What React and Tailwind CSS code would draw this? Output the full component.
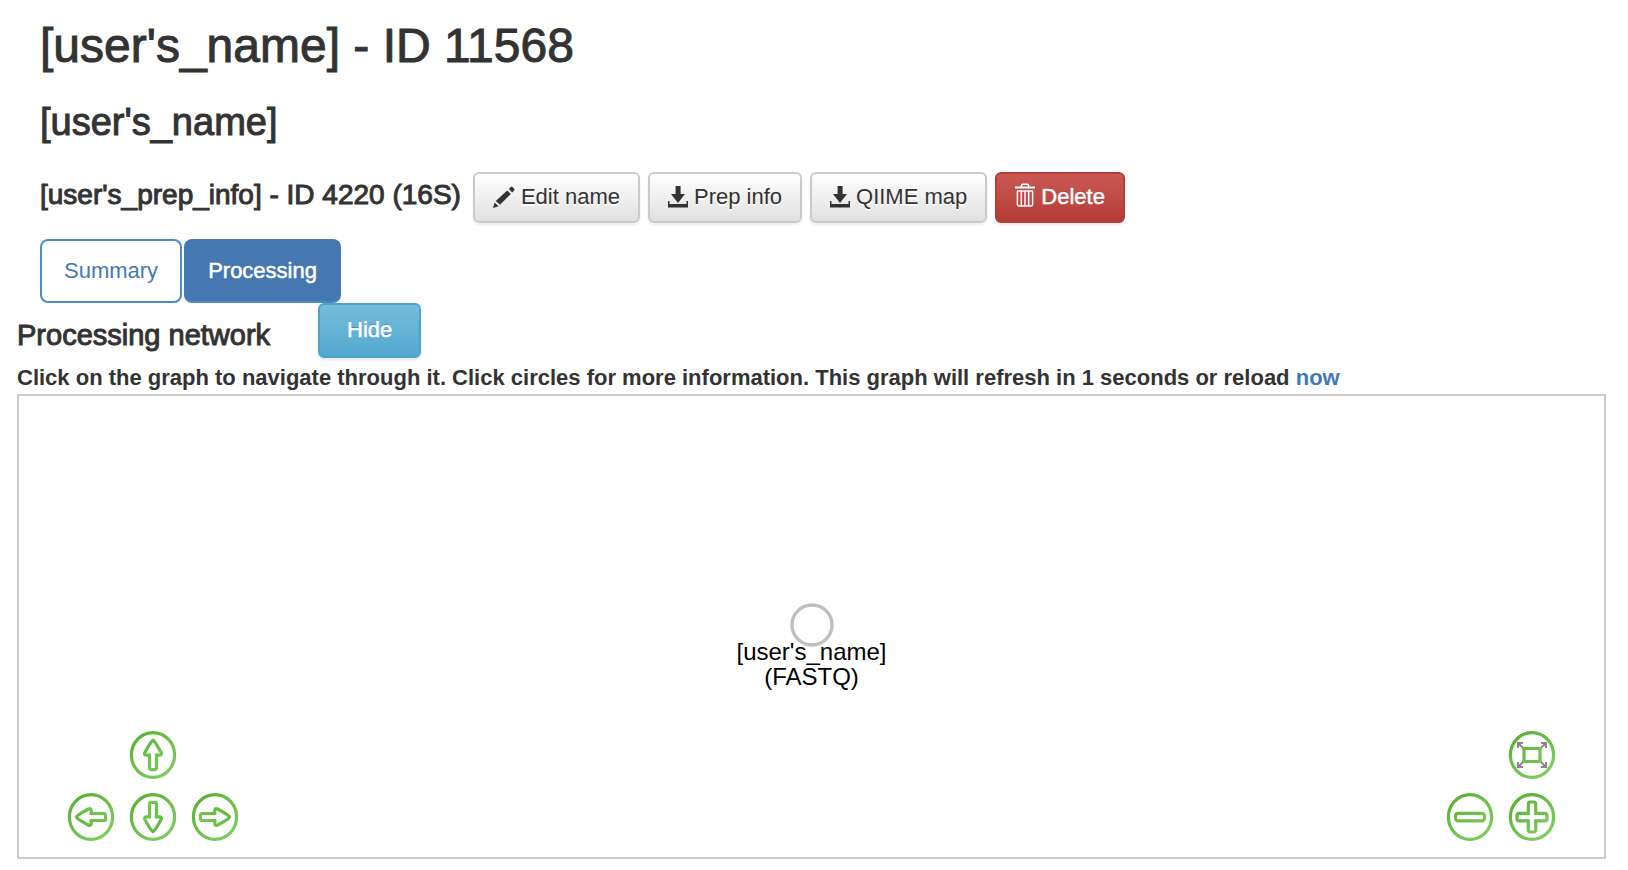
import React from 'react';

function PencilIcon() {
  return (
    <svg viewBox="0 0 22 22" className="h-[22px] w-[22px] shrink-0" fill="currentColor" aria-hidden="true">
      <path d="M0 22 1.6 16.4 5.6 20.2Z" />
      <path d="M2.8 15 14.2 4.4 17.8 8 7 18.8Z" />
      <path d="M15.8 3 17.8 1Q18.6.2 19.4 1L21.2 2.8Q22 3.6 21.2 4.4L19.2 6.4Z" />
    </svg>
  );
}

function DownloadIcon() {
  return (
    <svg viewBox="0 0 20 22" className="h-[22px] w-5 shrink-0" fill="currentColor" aria-hidden="true">
      <path d="M7.6 0H12.6V8H17L10 17 3 8H7.6Z" />
      <path d="M0 15H1.5V18H18.5V15H20V21.5H0Z" />
    </svg>
  );
}

function TrashIcon() {
  return (
    <svg viewBox="0 0 20 24" className="mb-1 h-6 w-5 shrink-0" fill="none" stroke="currentColor" aria-hidden="true">
      <path d="M0 4.5H20" strokeWidth="2" />
      <path d="M6.5 4.5V2.6Q6.5 1.2 7.9 1.2H12.1Q13.5 1.2 13.5 2.6V4.5" strokeWidth="1.6" />
      <path d="M2.4 8V21.6Q2.4 23 3.8 23H16.2Q17.6 23 17.6 21.6V8" strokeWidth="1.5" />
      <path d="M2 8H18" strokeWidth="1.5" />
      <path d="M6.3 8V22.5M10 8V22.5M13.7 8V22.5" strokeWidth="1.5" />
    </svg>
  );
}

const arrow =
  'M24 9.4C25.8 9.8 27 12.6 32 21.2Q33.2 23.8 31 24.2H27.5V36.8Q27.5 38.6 25.7 38.6H22.3Q20.5 38.6 20.5 36.8V24.2H17Q14.8 23.8 16 21.2C21 12.6 22.2 9.8 24 9.4Z';

function ControlButton({ label, children }) {
  return (
    <button type="button" aria-label={label} className="h-12 w-12 cursor-pointer">
      <svg viewBox="0 0 48 48" className="h-12 w-12" fill="none" stroke="url(#leaf)" strokeWidth="3.2" aria-hidden="true">
        <ellipse cx="24" cy="24" rx="21.6" ry="22.4" />
        {children}
      </svg>
    </button>
  );
}

const lightButton =
  'flex cursor-pointer items-center gap-[6px] rounded-[6px] border-2 border-[#cacaca] bg-gradient-to-b from-white to-[#e0e0e0] px-[18px] pt-[9px] pb-[10px] text-[22px] leading-[28px] text-[#333] shadow-[0_2px_3px_rgba(0,0,0,0.08)] [text-shadow:0_2px_0_#fff]';

export default function App() {
  return (
    <main className="bg-white pr-[22px] pb-[10px] pl-[17px] font-['Liberation_Sans',Arial,sans-serif] text-[#333]">
      <svg className="absolute h-0 w-0" aria-hidden="true">
        <defs>
          <linearGradient id="leaf" gradientUnits="userSpaceOnUse" x1="8" y1="4" x2="40" y2="44">
            <stop offset="0" stopColor="#5bb135" />
            <stop offset="1" stopColor="#7fcd60" />
          </linearGradient>
        </defs>
      </svg>
      <header className="px-[23px] pt-5">
        <h1 className="text-[48px] leading-[52px] [-webkit-text-stroke:1px_currentColor]">[user's_name] - ID 11568</h1>
        <h2 className="mt-7 text-[38px] leading-[44px] [-webkit-text-stroke:1px_currentColor]">[user's_name]</h2>
        <div className="mt-7 flex flex-wrap items-center gap-2">
          <h3 className="mr-1 pb-[6px] text-[28px] leading-[32px] [-webkit-text-stroke:1px_currentColor]">
            [user's_prep_info] - ID 4220 (16S)
          </h3>
          <button type="button" className={lightButton}>
            <PencilIcon />
            <span>Edit name</span>
          </button>
          <button type="button" className={lightButton}>
            <DownloadIcon />
            <span>Prep info</span>
          </button>
          <button type="button" className={lightButton}>
            <DownloadIcon />
            <span>QIIME map</span>
          </button>
          <button
            type="button"
            className="flex cursor-pointer items-center gap-[6px] rounded-[6px] border-2 border-[#b43f3a] bg-gradient-to-b from-[#ca5954] to-[#b33c35] px-[18px] pt-[9px] pb-[10px] text-[22px] leading-[28px] text-white shadow-[0_2px_3px_rgba(0,0,0,0.08)] [-webkit-text-stroke:0.5px_currentColor] [text-shadow:0_-1px_0_rgba(0,0,0,0.2)]"
          >
            <TrashIcon />
            <span>Delete</span>
          </button>
        </div>
        <nav className="mt-4 flex gap-[2px] text-[22px] leading-[28px]">
          <a href="#summary" className="rounded-[8px] border-2 border-[#4f8bca] px-[22px] py-4 text-[#437ab5]">
            Summary
          </a>
          <a
            href="#processing"
            aria-current="page"
            className="rounded-[8px] border-2 border-[#4679b2] border-b-[#4f86c4] bg-[#4578b1] px-[22px] py-4 text-white [-webkit-text-stroke:0.5px_currentColor]"
          >
            Processing
          </a>
        </nav>
      </header>

      <section>
        <div className="flex items-start gap-12">
          <h4 className="pt-4 text-[29px] leading-[32px] [-webkit-text-stroke:1px_currentColor]">Processing network</h4>
          <button
            type="button"
            className="cursor-pointer rounded-[6px] border-2 border-[#4da4c3] bg-gradient-to-b from-[#74bddb] to-[#52a8cf] px-[27px] pt-[11px] pb-[12px] text-[22px] leading-[28px] text-white shadow-[0_2px_3px_rgba(0,0,0,0.1)] [-webkit-text-stroke:0.5px_currentColor] [text-shadow:0_-1px_0_rgba(0,0,0,0.3)]"
          >
            Hide
          </button>
        </div>
        <p className="mt-[6px] text-[22px] leading-[28px] font-bold">
          Click on the graph to navigate through it. Click circles for more information. This graph will refresh in 1
          seconds or reload{' '}
          <a href="#now" className="text-[#437ab5]">
            now
          </a>
        </p>

        <div className="relative mt-[2px] flex min-h-[465px] items-end justify-between border-2 border-[#ccc] pr-12 pb-4 pl-12">
          <div className="absolute top-[207px] left-1/2 flex -translate-x-1/2 flex-col items-center">
            <svg viewBox="0 0 44 44" className="h-11 w-11" aria-hidden="true">
              <circle cx="22" cy="22" r="20" fill="#fff" stroke="#bfbfbf" strokeWidth="3.4" />
            </svg>
            <div className="relative -mt-2 text-center text-[24px] leading-[25px] text-black">
              <div>[user's_name]</div>
              <div>(FASTQ)</div>
            </div>
          </div>

          <div className="grid grid-cols-3 gap-[14px]">
            <div className="col-start-2 h-12">
              <ControlButton label="Move up">
                <path d={arrow} />
              </ControlButton>
            </div>
            <div className="col-start-1 h-12">
              <ControlButton label="Move left">
                <path d={arrow} transform="rotate(-90 24 24)" />
              </ControlButton>
            </div>
            <ControlButton label="Move down">
              <path d={arrow} transform="rotate(180 24 24)" />
            </ControlButton>
            <ControlButton label="Move right">
              <path d={arrow} transform="rotate(90 24 24)" />
            </ControlButton>
          </div>

          <div className="grid grid-cols-2 gap-[14px]">
            <div className="col-start-2 h-12">
              <ControlButton label="Fit graph">
                <path
                  d="M10 17V12H15M10.5 12.5 16 18M33 12H38V17M37.5 12.5 32 18M10 31V36H15M10.5 35.5 16 30M33 36H38V31M37.5 35.5 32 30"
                  stroke="#8a858c"
                  strokeWidth="2"
                />
                <path d="M16 17.5H32V30.5H16Z" />
              </ControlButton>
            </div>
            <div className="col-start-1 h-12">
              <ControlButton label="Zoom out">
                <rect x="9.5" y="20.4" width="29" height="7.4" rx="2.6" />
              </ControlButton>
            </div>
            <ControlButton label="Zoom in">
              <path d="M20.3 11.2Q20.3 9 22.3 9H25.7Q27.7 9 27.7 11.2V20.4H37Q39 20.4 39 22.4V25.8Q39 27.8 37 27.8H27.7V36.8Q27.7 39 25.7 39H22.3Q20.3 39 20.3 36.8V27.8H11Q9 27.8 9 25.8V22.4Q9 20.4 11 20.4H20.3Z" />
            </ControlButton>
          </div>
        </div>
      </section>
    </main>
  );
}
